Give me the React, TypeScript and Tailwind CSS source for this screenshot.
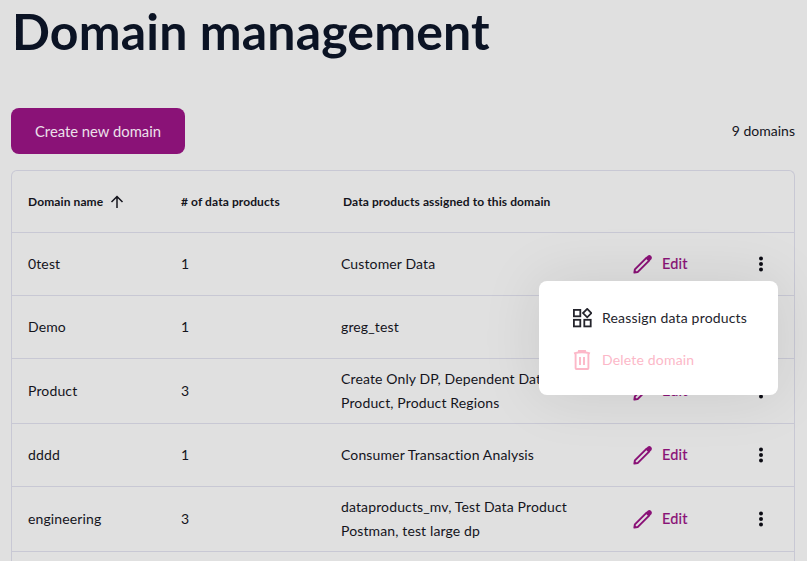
import React from "react";

const font = { fontFamily: "Lato, 'Noto Sans', sans-serif" };

function Pencil() {
  return (
    <svg width="20" height="20" viewBox="0 0 20 20" fill="none" className="shrink-0">
      <path d="M1.4 18.6 L1.9 15.4 L13.4 3.9 L16.1 6.6 L4.6 18.1 Z" stroke="#8a1277" strokeWidth="2" strokeLinejoin="round" />
      <path d="M12.8 3.6 L16.4 7.2 L18.6 5 Q19.4 3.4 18.2 2 Q16.6 0.6 15 1.4 Z" fill="#8a1277" />
    </svg>
  );
}

function Kebab() {
  return (
    <svg width="6" height="18" viewBox="0 0 6 18" className="shrink-0">
      <circle cx="3" cy="3.5" r="2" fill="#0c0c14" />
      <circle cx="3" cy="9" r="2" fill="#0c0c14" />
      <circle cx="3" cy="14.5" r="2" fill="#0c0c14" />
    </svg>
  );
}

type RowT = { name: string; n: string; dp: string; h: string };
const rows: RowT[] = [
  { name: "0test", n: "1", dp: "Customer Data", h: "h-[63px]" },
  { name: "Demo", n: "1", dp: "greg_test", h: "h-[63px]" },
  { name: "Product", n: "3", dp: "Create Only DP, Dependent Data Product, Product Regions", h: "h-[65px]" },
  { name: "dddd", n: "1", dp: "Consumer Transaction Analysis", h: "h-[63px]" },
  { name: "engineering", n: "3", dp: "dataproducts_mv, Test Data Product Postman, test large dp", h: "h-[65px]" },
];

export default function App() {
  return (
    <div className="relative h-[561px] w-[807px] overflow-hidden bg-[#e0e0e0] text-[#14141c]" style={font}>
      <h1 className="h-[108px] pl-3 pt-[1px] text-[50px] font-bold leading-[60px] tracking-[0.15px] text-[#0b1324]">Domain management</h1>
      <div className="flex h-[46px] items-center justify-between pl-[11px] pr-3">
        <button className="h-[46px] w-[174px] rounded-lg bg-[#8a1277] text-[14.8px] text-[#ece0ea]">Create new domain</button>
        <span className="text-sm">9 domains</span>
      </div>
      <div className="ml-[11px] mt-4 h-[500px] w-[784px] rounded-t-md border border-b-0 border-[#c8c8d4]">
        <div className="flex h-[62px] items-center border-b border-[#c8c8d4] text-xs font-bold tracking-[0.1px]">
          <div className="flex w-[169px] items-center gap-[7px] pl-4">
            Domain name
            <svg width="14" height="14" viewBox="0 0 14 14" fill="none" stroke="#14141c" strokeWidth="1.5">
              <path d="M7 13V1.5M1.5 7 7 1.5 12.5 7" />
            </svg>
          </div>
          <div className="w-[162px]"># of data products</div>
          <div>Data products assigned to this domain</div>
        </div>
        {rows.map((r) => (
          <div key={r.name} className={`flex items-center border-b border-[#c8c8d4] text-sm tracking-[0.13px] ${r.h}`}>
            <div className="w-[169px] pl-4">{r.name}</div>
            <div className="w-[160px]">{r.n}</div>
            <div className="w-[292px] pr-[40px] leading-6">{r.dp}</div>
            <div className="flex w-[125px] items-center gap-[9px] text-[14.5px] font-medium text-[#8a1277] [-webkit-text-stroke:0.12px_#8a1277]">
              <Pencil />
              Edit
            </div>
            <Kebab />
          </div>
        ))}
      </div>
      <div className="absolute left-[539px] top-[281px] flex h-[114px] w-[239px] flex-col justify-center gap-[22px] rounded-lg bg-white pl-[33px] pt-[2px] text-sm tracking-[0.18px] shadow-[0_0_60px_rgba(0,0,0,0.1)]">
        <div className="flex items-center gap-[10px] text-[#24242c]">
          <svg width="20" height="20" viewBox="0 0 20 20" fill="none" stroke="#24242c" strokeWidth="1.8">
            <rect x="1.9" y="1.9" width="6.4" height="6.4" />
            <rect x="1.9" y="11.8" width="6.4" height="6.6" />
            <rect x="12.3" y="11.8" width="6.4" height="6.6" />
            <path d="M15.2 0.9 19.4 5.1 15.2 9.3 11 5.1Z" />
          </svg>
          Reassign data products
        </div>
        <div className="flex items-center gap-[10px] text-[#fcb8c8]">
          <svg width="20" height="20" viewBox="0 0 20 20" fill="none" stroke="#fcb8c8" strokeWidth="1.9">
            <path d="M2 3.4Q10 1.2 18 3.4M7 2.4V1H13V2.4M3.6 3.6V18.2Q3.6 19 4.4 19H15.6Q16.4 19 16.4 18.2V3.6M8 7V15M12 7V15" />
          </svg>
          Delete domain
        </div>
      </div>
    </div>
  );
}
